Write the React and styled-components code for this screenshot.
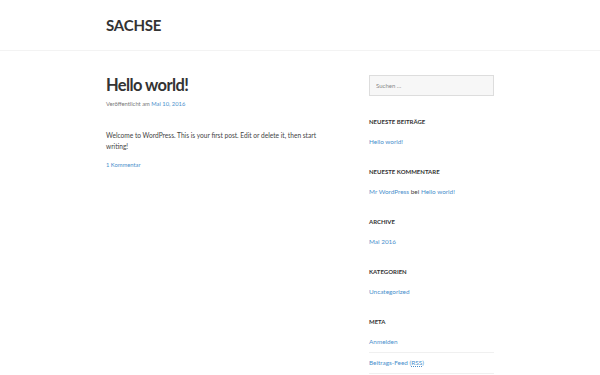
import React from 'react';
import styled, {createGlobalStyle} from 'styled-components';

const Global = createGlobalStyle`
    html, body {
        margin: 0;
        padding: 0;
        background: #fff;
        font-family: Lato, "Open Sans", Arial, sans-serif;
        color: #444;
    }
    a {
        color: #4a8fcc;
        text-decoration: none;
    }
`

const Header = styled.header`
    height: 50px;
    border-bottom: 1px solid #f3f3f3;
    display: flex;
    align-items: center;
`

const Wrap = styled.div`
    width: 388px;
    margin: 0 auto;
    display: ${props => props.$split ? 'flex' : 'block'};
    justify-content: space-between;
`

const SiteTitle = styled.h1`
    margin: 0;
    font-size: 15px;
    font-weight: 700;
    color: #333;
    letter-spacing: -0.2px;
`

const Main = styled.main`
    width: 230px;
    padding-top: 23px;
`

const PostTitle = styled.h2`
    margin: 0;
    font-size: 16.5px;
    line-height: 22px;
    font-weight: 700;
    color: #333;
    letter-spacing: -0.6px;
`

const Meta = styled.div`
    margin-top: 3px;
    font-size: 5.8px;
    line-height: 10px;
    color: #777;
`

const Body = styled.p`
    margin: 21px 0 0;
    font-size: 6.6px;
    line-height: 11px;
    color: #444;
`

const Small = styled.div`
    margin-top: 8px;
    font-size: 5.8px;
    line-height: 10px;
`

const Sidebar = styled.aside`
    width: 125px;
    padding-top: 24px;
`

const Search = styled.input`
    box-sizing: border-box;
    display: block;
    width: 125px;
    height: 21px;
    border: 1px solid #ddd;
    background: #f7f7f7;
    padding: 0 6px;
    font-family: inherit;
    font-size: 6px;
    color: #777;
    outline: none;
    &::placeholder {
        color: #888;
    }
`

const Widget = styled.section`
    margin-top: ${props => props.$first ? '21px' : '20px'};
`

const WidgetTitle = styled.h3`
    margin: 0;
    font-size: 6px;
    line-height: 10px;
    font-weight: 700;
    text-transform: uppercase;
    color: #333;
`

const List = styled.ul`
    list-style: none;
    margin: 10px 0 0;
    padding: 0;
`

const Item = styled.li`
    font-size: 6.4px;
    line-height: 10px;
    color: #444;
    padding-bottom: ${props => props.$ruled ? '5px' : '0'};
    margin-bottom: ${props => props.$ruled ? '5px' : '0'};
    border-bottom: ${props => props.$ruled ? '1px solid #f0f0f0' : 'none'};
`

const Abbr = styled.abbr`
    text-decoration: none;
    border-bottom: 1px dotted #4a8fcc;
`

export default function App() {
    return (
        <>
            <Global />
            <Header>
                <Wrap>
                    <SiteTitle>SACHSE</SiteTitle>
                </Wrap>
            </Header>
            <Wrap $split>
                <Main>
                    <PostTitle>Hello world!</PostTitle>
                    <Meta>Veröffentlicht am <a href="#">Mai 10, 2016</a></Meta>
                    <Body>Welcome to WordPress. This is your first post. Edit or delete it, then start writing!</Body>
                    <Small><a href="#">1 Kommentar</a></Small>
                </Main>
                <Sidebar>
                    <Search placeholder="Suchen …" />
                    <Widget $first>
                        <WidgetTitle>Neueste Beiträge</WidgetTitle>
                        <List><Item><a href="#">Hello world!</a></Item></List>
                    </Widget>
                    <Widget>
                        <WidgetTitle>Neueste Kommentare</WidgetTitle>
                        <List><Item><a href="#">Mr WordPress</a> bei <a href="#">Hello world!</a></Item></List>
                    </Widget>
                    <Widget>
                        <WidgetTitle>Archive</WidgetTitle>
                        <List><Item><a href="#">Mai 2016</a></Item></List>
                    </Widget>
                    <Widget>
                        <WidgetTitle>Kategorien</WidgetTitle>
                        <List><Item><a href="#">Uncategorized</a></Item></List>
                    </Widget>
                    <Widget>
                        <WidgetTitle>Meta</WidgetTitle>
                        <List>
                            <Item $ruled><a href="#">Anmelden</a></Item>
                            <Item $ruled><a href="#">Beitrags-Feed (<Abbr>RSS</Abbr>)</a></Item>
                        </List>
                    </Widget>
                </Sidebar>
            </Wrap>
        </>
    )
}
